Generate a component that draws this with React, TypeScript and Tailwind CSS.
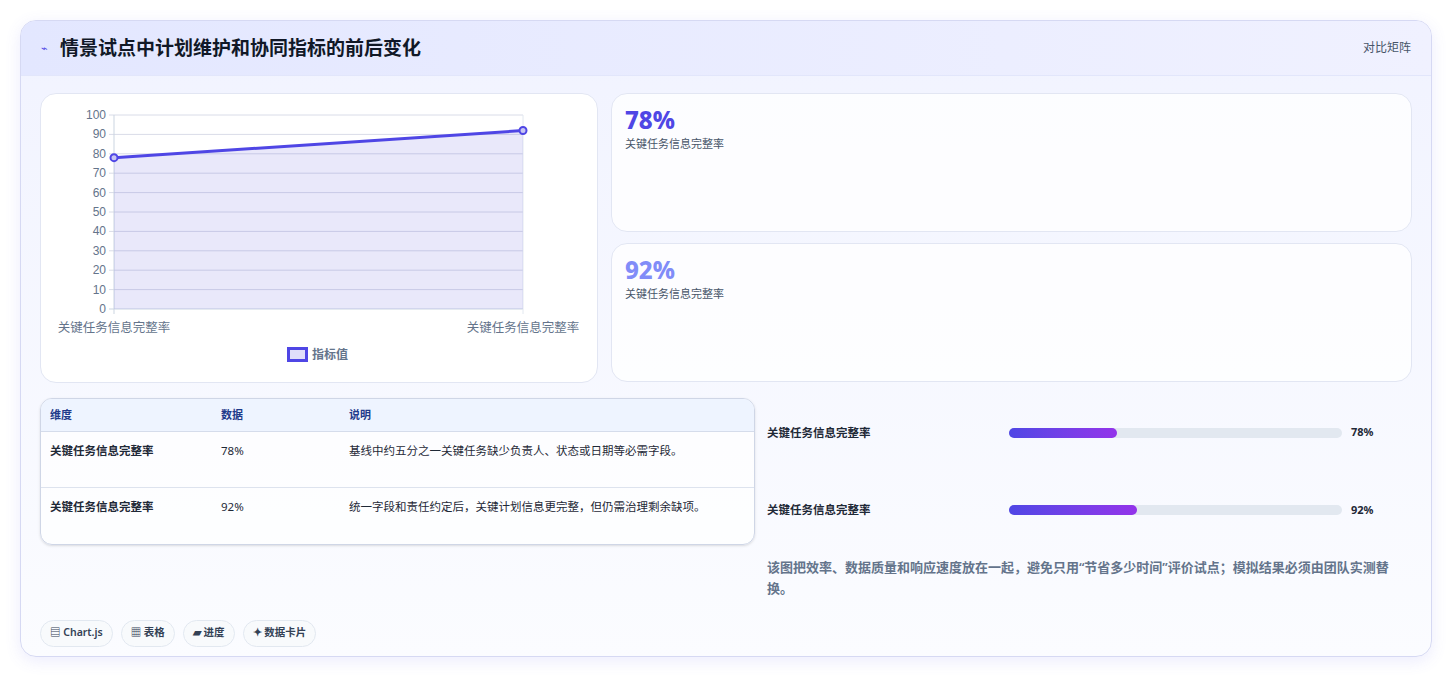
import React from 'react';

const font = { fontFamily: '"Noto Sans", "Noto Sans CJK SC", sans-serif' };

function LineChart() {
  const left = 73, right = 482, top = 21, bottom = 215;
  const y = (v: number) => bottom - (v / 100) * (bottom - top);
  const ticks = [0, 10, 20, 30, 40, 50, 60, 70, 80, 90, 100];
  return (
    <svg width="557" height="290" viewBox="0 0 557 290" style={{ fontFamily: '"Liberation Sans", "Noto Sans CJK SC", sans-serif' }}>
      {ticks.map((t) => (
        <g key={t}>
          <line x1={left - 5} x2={right} y1={y(t)} y2={y(t)} stroke={t === 0 ? '#cbd5e1' : '#d9dce8'} strokeWidth="1" />
          <text x={left - 8} y={y(t) + 4} textAnchor="end" fontSize="12" fill="#64748b">{t}</text>
        </g>
      ))}
      <line x1={left} x2={left} y1={top} y2={bottom + 5} stroke="#cbd5e1" />
      <line x1={right} x2={right} y1={top} y2={bottom + 5} stroke="#e2e8f0" />
      <polygon points={`${left},${y(78)} ${right},${y(92)} ${right},${bottom} ${left},${bottom}`} fill="rgba(99,91,220,0.14)" />
      <line x1={left} y1={y(78)} x2={right} y2={y(92)} stroke="#4f46e5" strokeWidth="3" />
      <circle cx={left} cy={y(78)} r="3.5" fill="#c7c5f3" stroke="#4f46e5" strokeWidth="2" />
      <circle cx={right} cy={y(92)} r="3.5" fill="#c7c5f3" stroke="#4f46e5" strokeWidth="2" />
      <text x={left} y={238} textAnchor="middle" fontSize="12.5" fill="#64748b">关键任务信息完整率</text>
      <text x={right} y={238} textAnchor="middle" fontSize="12.5" fill="#64748b">关键任务信息完整率</text>
      <rect x="247.5" y="254.5" width="18" height="12" fill="#e0defa" stroke="#4f46e5" strokeWidth="3" />
      <text x="271" y="265" fontSize="12" fontWeight="bold" fill="#64748b">指标值</text>
    </svg>
  );
}

const rows = [
  { name: '关键任务信息完整率', val: '78%', note: '基线中约五分之一关键任务缺少负责人、状态或日期等必需字段。' },
  { name: '关键任务信息完整率', val: '92%', note: '统一字段和责任约定后，关键计划信息更完整，但仍需治理剩余缺项。' },
];

export default function App() {
  return (
    <div className="w-[1453px] h-[678px] bg-white pt-5 pl-5" style={font}>
      <div className="w-[1412px] h-[637px] rounded-2xl border border-[#d6d9f3] bg-gradient-to-b from-[#f1f3ff] to-[#fbfcff] shadow-[0_4px_16px_rgba(99,102,241,0.12)] overflow-hidden flex flex-col">
        <div className="h-[55px] shrink-0 flex items-center justify-between px-5 bg-gradient-to-r from-[#e3e7ff] to-[#f0f1ff] border-b border-[#e2e6fb]">
          <div className="flex items-center gap-3">
            <span className="text-[#4f46e5] text-[11px]">⌁</span>
            <h1 className="text-[19px] font-bold text-[#111827]">情景试点中计划维护和协同指标的前后变化</h1>
          </div>
          <span className="text-[12px] text-[#475569]">对比矩阵</span>
        </div>
        <div className="flex-1 px-[19px] pt-[17px]">
          <div className="flex gap-[13px]">
            <div className="w-[558px] h-[290px] bg-white rounded-2xl border border-[#e2e6f3]">
              <LineChart />
            </div>
            <div className="flex-1 flex flex-col gap-[11px]">
              <div className="h-[139px] bg-white/80 rounded-2xl border border-[#e2e6f3] px-[13px] pt-[10px]">
                <div className="text-[24px] font-extrabold text-[#4f46e5] leading-[32px]">78%</div>
                <div className="text-[11px] text-[#475569]">关键任务信息完整率</div>
              </div>
              <div className="h-[139px] bg-white/80 rounded-2xl border border-[#e2e6f3] px-[13px] pt-[10px]">
                <div className="text-[24px] font-extrabold text-[#818cf8] leading-[32px]">92%</div>
                <div className="text-[11px] text-[#475569]">关键任务信息完整率</div>
              </div>
            </div>
          </div>
          <div className="flex gap-3 mt-[15px]">
            <div className="w-[715px] h-[147px] rounded-xl border border-[#cfd6e6] bg-white/70 overflow-hidden shadow-sm">
              <div className="h-[33px] flex items-center bg-[#eef4ff] border-b border-[#d5dceb] text-[11px] font-bold text-[#1e3a8a] px-[9px]">
                <span className="w-[171px]">维度</span>
                <span className="w-[128px]">数据</span>
                <span>说明</span>
              </div>
              {rows.map((r, i) => (
                <div key={i} className={`h-[56px] flex items-start pt-[10px] px-[9px] text-[11.5px] text-[#1f2937] ${i === 0 ? 'border-b border-[#dde3ee]' : ''}`}>
                  <span className="w-[171px] font-semibold">{r.name}</span>
                  <span className="w-[128px]">{r.val}</span>
                  <span>{r.note}</span>
                </div>
              ))}
            </div>
            <div className="flex-1 pt-[26px]">
              {[{ v: '78%', w: 'w-[108px]' }, { v: '92%', w: 'w-[128px]' }].map((p, i) => (
                <div key={i} className={`flex items-center ${i === 1 ? 'mt-[60px]' : ''}`}>
                  <span className="w-[242px] text-[11.5px] font-semibold text-[#1f2937]">关键任务信息完整率</span>
                  <div className="w-[333px] h-[10px] rounded-full bg-[#e2e8f0]">
                    <div className={`${p.w} h-full rounded-full bg-gradient-to-r from-[#4f46e5] to-[#9333ea]`} />
                  </div>
                  <span className="ml-[9px] text-[11px] font-bold text-[#1f2937]">{p.v}</span>
                </div>
              ))}
              <p className="mt-[38px] text-[13px] font-semibold text-[#64748b] leading-[21px] w-[630px]">该图把效率、数据质量和响应速度放在一起，避免只用“节省多少时间”评价试点；模拟结果必须由团队实测替换。</p>
            </div>
          </div>
          <div className="flex gap-2 mt-[21px]">
            {['▤ Chart.js', '▦ 表格', '▰ 进度', '✦ 数据卡片'].map((t) => (
              <span key={t} className="h-[27px] px-[9px] flex items-center rounded-full border border-[#e2e8f0] bg-[#f8fafc] text-[10.5px] font-semibold text-[#334155]">{t}</span>
            ))}
          </div>
        </div>
      </div>
    </div>
  );
}
